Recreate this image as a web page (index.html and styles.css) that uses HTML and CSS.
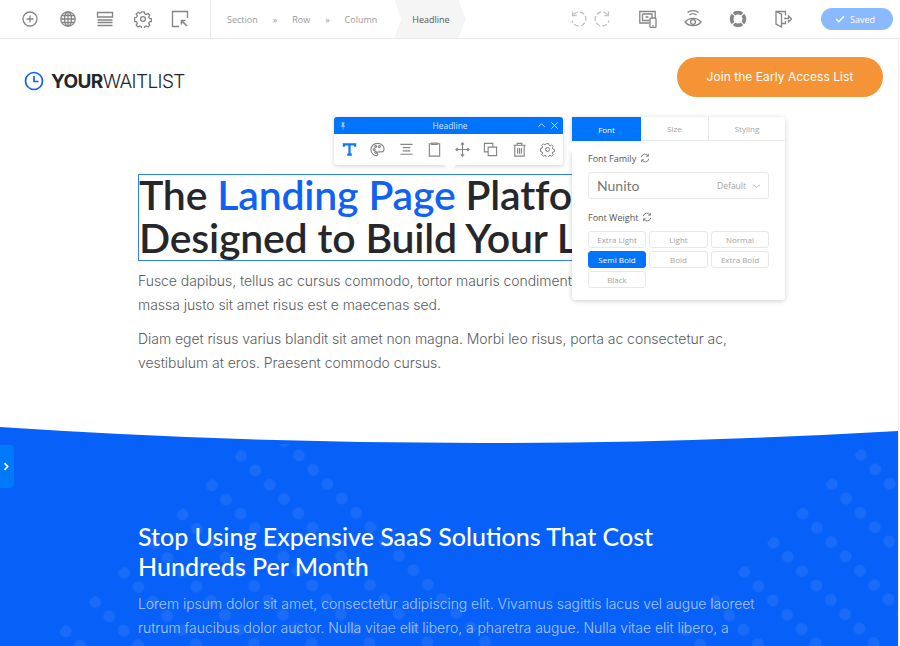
FILE: index.html
```html
<!DOCTYPE html>
<html lang="en">
<head>
    <meta charset="UTF-8">
    <meta name="viewport" content="width=device-width, initial-scale=1.0">
    <title>Your Waitlist - Editor</title>
    <link rel="stylesheet" href="styles.css">
</head>
<body>
    <div class="topbar">
        <div class="tools">
            <svg class="tool" viewBox="0 0 18 18"><circle cx="9" cy="9" r="7"/><path d="M9 5.500v7M5.500 9h7"/></svg>
            <svg class="tool" viewBox="0 0 18 18"><circle cx="9" cy="9" r="7.200"/><ellipse cx="9" cy="9" rx="3.500" ry="7.200"/><path d="M2 9h14M2.800 5.500h12.400M2.800 12.500h12.400M9 2v14"/></svg>
            <svg class="tool" viewBox="0 0 18 18"><path d="M1.500 2.500h15v4.500h-15zM1.500 10h15M1.500 12.500h15M1.500 15.500h15"/></svg>
            <svg class="tool" viewBox="0 0 18 18"><circle cx="9" cy="9" r="2.400"/><path d="M7.700 1.800h2.600l.4 2 1.500.7 1.800-1.100 1.800 1.800-1.100 1.800.7 1.500 2 .4v2.600l-2 .4-.7 1.500 1.100 1.800-1.800 1.800-1.800-1.100-1.500.7-.4 2H7.700l-.4-2-1.500-.7-1.800 1.100-1.800-1.800 1.100-1.800-.7-1.500-2-.4V7.700l2-.4.700-1.500-1.100-1.800 1.800-1.800 1.800 1.100 1.500-.7z"/></svg>
            <svg class="tool" viewBox="0 0 18 18"><path d="M8 16.500H1.500v-15h15V8"/><path d="M16 16l-5.500-5.500M10.500 14.500v-4h4" class="thick"/></svg>
        </div>
        <div class="crumbs">
            <span>Section</span>
            <span class="sep">»</span>
            <span>Row</span>
            <span class="sep">»</span>
            <span>Column</span>
            <span class="crumb-active">Headline</span>
        </div>
        <div class="actions">
            <div class="history">
                <svg class="tool faint" viewBox="0 0 18 18"><path d="M3.500 4.500a7 7 0 1 1-1.400 6" stroke-dasharray="5 2"/><path d="M2.500 1.500v4h4"/></svg>
                <svg class="tool faint" viewBox="0 0 18 18"><path d="M14.500 4.500a7 7 0 1 0 1.400 6" stroke-dasharray="5 2"/><path d="M15.500 1.500v4h-4"/></svg>
            </div>
            <svg class="tool" viewBox="0 0 18 18"><path d="M10.500 13H.8V1.500h15.400v6.500"/><path d="M3.500 4h9.500v4M3.500 4v6.500h7M6.500 7h3"/><rect x="11" y="8" width="6" height="9.500" rx="1"/><path d="M13.200 15.800h1.600"/></svg>
            <svg class="tool" viewBox="0 0 18 18"><path d="M5.500 5a5.500 5.500 0 0 1 7 0M3.500 2.600a8.500 8.500 0 0 1 11 0"/><path d="M1 12c4-4.800 12-4.800 16 0-4 4.800-12 4.800-16 0z"/><circle cx="9" cy="12" r="2.400"/></svg>
            <svg class="tool buoy" viewBox="0 0 18 18"><circle cx="9" cy="9" r="6.400"/><path d="M3 3l3.600 3.600M15 3l-3.600 3.600M3 15l3.600-3.600M15 15l-3.600-3.600" class="spoke"/></svg>
            <svg class="tool" viewBox="0 0 18 18"><path d="M11.500 5.500V1.500H2v12.500l5.500 3V4.200L2 1.500M7.500 13.500h4V11"/><path d="M10 8.500h4.500V6l3 3-3 3V10"/></svg>
            <div class="saved">
                <svg class="saved-check" viewBox="0 0 12 10"><path d="M1 5l3.500 3.500L11 1.500"/></svg>
                <span>Saved</span>
            </div>
        </div>
    </div>

    <div class="page">
        <div class="header">
            <div class="logo">
                <svg class="logo-icon" viewBox="0 0 20 20"><circle cx="10" cy="10" r="8.500"/><path d="M10 5v5.500h4.500"/></svg>
                <span class="logo-text"><b>YOUR</b>WAITLIST</span>
            </div>
            <a class="cta">Join the Early Access List</a>
        </div>

        <div class="hero">
            <h1 class="headline"><span class="headline-text">The <span class="accent">Landing Page</span> Platform Designed to Build Your List</span></h1>
            <p>Fusce dapibus, tellus ac cursus commodo, tortor mauris condimentum nibh, ut fermentum massa justo sit amet risus est e maecenas sed.</p>
            <p>Diam eget risus varius blandit sit amet non magna. Morbi leo risus, porta ac consectetur ac, vestibulum at eros. Praesent commodo cursus.</p>
        </div>

        <svg class="wave" viewBox="0 0 898 17" preserveAspectRatio="none"><path d="M0 0Q449 30 898 4V17H0Z"/></svg>
        <div class="offer">
            <svg class="dots" viewBox="0 444 898 202">
                <defs>
                    <pattern id="dots-left" patternUnits="userSpaceOnUse" x="-10.130" y="-20.650" width="20.270" height="41.300" patternTransform="translate(241 456) rotate(45)">
                        <circle cx="10.130" cy="20.650" r="6" fill="#fff" fill-opacity="0.07"/>
                    </pattern>
                    <pattern id="dots-right" patternUnits="userSpaceOnUse" x="-10.130" y="-20.650" width="20.270" height="41.300" patternTransform="translate(861 455) rotate(45)">
                        <circle cx="10.130" cy="20.650" r="6" fill="#fff" fill-opacity="0.07"/>
                    </pattern>
                </defs>
                <polygon points="271,419 498,646 44,646" fill="url(#dots-left)"/>
                <polygon points="898,411 898,646 663,646" fill="url(#dots-right)"/>
            </svg>
            <div class="offer-body">
                <h2>Stop Using Expensive SaaS Solutions That Cost Hundreds Per Month</h2>
                <p>Lorem ipsum dolor sit amet, consectetur adipiscing elit. Vivamus sagittis lacus vel augue laoreet rutrum faucibus dolor auctor. Nulla vitae elit libero, a pharetra augue. Nulla vitae elit libero, a</p>
            </div>
        </div>

        <div class="side-tab">
            <svg viewBox="0 0 6 8"><path d="M1.200 1l2.800 3-2.800 3"/></svg>
        </div>

        <div class="el-bar">
            <div class="el-bar-head">
                <svg class="pin" viewBox="0 0 8 10"><path d="M2 0h4v1l-.5.500V4L7 6H4.500v4h-1V6H1l1.500-2V1.500L2 1z"/></svg>
                <span>Headline</span>
                <svg class="head-btn" viewBox="0 0 10 10"><path d="M1.500 6.500L5 3l3.500 3.500"/></svg>
                <svg class="head-btn" viewBox="0 0 10 10"><path d="M1.500 1.500l7 7M8.500 1.500l-7 7"/></svg>
            </div>
            <div class="el-bar-icons">
                <svg class="el-icon active" viewBox="0 0 16 16"><path d="M2 5V2.500h12V5M8 2.500v11M5.500 13.500h5"/></svg>
                <svg class="el-icon" viewBox="0 0 16 16"><path d="M8 1.500c-4 0-7 3-7 6.500s3 6.500 6 6.500c1.500 0 1.500-1.200 1-2-.5-1 0-2 1.500-2h2.500c1.500 0 3-1 3-3C15 4 12 1.500 8 1.500z"/><circle cx="4.500" cy="8" r="1"/><circle cx="6" cy="4.700" r="1"/><circle cx="10" cy="4.700" r="1"/><circle cx="6" cy="11" r="1"/></svg>
                <svg class="el-icon" viewBox="0 0 16 16"><path d="M1.500 2.500h13M4 6h8M4 9.500h8M1.500 13h13"/></svg>
                <svg class="el-icon" viewBox="0 0 16 16"><path d="M5 1.800H2.500v13.200h11V1.800H11M5 1h6v1.500H5z"/></svg>
                <svg class="el-icon" viewBox="0 0 16 16"><path d="M8 1v14M1 8h14M6.300 2.800L8 1l1.700 1.800M6.300 13.200L8 15l1.700-1.800M2.800 6.300L1 8l1.800 1.700M13.200 6.300L15 8l-1.800 1.700"/></svg>
                <svg class="el-icon" viewBox="0 0 16 16"><path d="M10.500 5.500V1.500h-9v9h4M5.500 5.500h9v9h-9z"/></svg>
                <svg class="el-icon" viewBox="0 0 16 16"><path d="M1.500 3.500h13M5.500 3.500V1.500h5v2M3 3.500v11.500h10V3.500M6 6.500v6M8 6.500v6M10 6.500v6"/></svg>
                <svg class="el-icon" viewBox="0 0 18 18"><circle cx="9" cy="9" r="2.400"/><path d="M7.700 1.800h2.600l.4 2 1.500.7 1.800-1.100 1.800 1.800-1.100 1.800.7 1.500 2 .4v2.600l-2 .4-.7 1.500 1.100 1.800-1.800 1.800-1.800-1.100-1.500.7-.4 2H7.700l-.4-2-1.500-.7-1.800 1.100-1.800-1.800 1.100-1.800-.7-1.500-2-.4V7.700l2-.4.700-1.500-1.100-1.800 1.800-1.800 1.800 1.100 1.500-.7z"/></svg>
            </div>
        </div>

        <div class="font-panel">
            <div class="tabs">
                <div class="tab tab-font active">Font</div>
                <div class="tab tab-size">Size</div>
                <div class="tab tab-styling">Styling</div>
            </div>
            <div class="panel-body">
                <div class="field-label">Font Family
                    <svg class="refresh" viewBox="0 0 12 12"><path d="M1.500 5A4.500 4.500 0 0 1 9.800 3.500M10.500 7A4.500 4.500 0 0 1 2.200 8.500M10 1v2.800H7.200M2 11V8.200h2.800"/></svg>
                </div>
                <div class="select">
                    <span class="select-name">Nunito</span>
                    <span class="select-default">Default</span>
                    <svg class="select-arrow" viewBox="0 0 10 6"><path d="M1 1.500l4 3 4-3"/></svg>
                </div>
                <div class="field-label">Font Weight
                    <svg class="refresh" viewBox="0 0 12 12"><path d="M1.500 5A4.500 4.500 0 0 1 9.800 3.500M10.500 7A4.500 4.500 0 0 1 2.200 8.500M10 1v2.800H7.200M2 11V8.200h2.800"/></svg>
                </div>
                <div class="weights">
                    <div class="weight">Extra Light</div>
                    <div class="weight">Light</div>
                    <div class="weight">Normal</div>
                    <div class="weight active">Semi Bold</div>
                    <div class="weight">Bold</div>
                    <div class="weight">Extra Bold</div>
                    <div class="weight">Black</div>
                </div>
            </div>
        </div>
    </div>
</body>
</html>
```

FILE: styles.css
```css
* {
    box-sizing: border-box;
}
html, body {
    height: 646px;
    overflow: hidden;
}
body {
    margin: 0;
    background-color: white;
    font-family: "Open Sans", sans-serif;
}
h1, h2, p {
    margin: 0;
}

/* top bar */
.topbar {
    display: flex;
    align-items: center;
    height: 39px;
    border-bottom: 1px solid #e8e8e8;
    background-color: white;
}
.tool {
    width: 18px;
    height: 18px;
    fill: none;
    stroke: #858585;
    stroke-width: 1.300;
    flex: none;
}
.tool .thick {
    stroke-width: 1.600;
}
.tool.faint {
    stroke: #c4c4c4;
}
.tool.buoy circle {
    stroke-width: 3.800;
}
.tool.buoy .spoke {
    stroke: white;
    stroke-width: 1.100;
}
.tools {
    display: flex;
    gap: 19.500px;
    height: 38px;
    align-items: center;
    padding: 0 21px;
    border-right: 1px solid #e8e8e8;
}
.crumbs {
    display: flex;
    align-items: center;
    gap: 15px;
    height: 38px;
    padding-left: 16px;
    font-size: 9px;
    color: #999;
}
.crumb-active {
    display: flex;
    align-items: center;
    height: 38px;
    margin-left: 2px;
    padding: 0 16px 0 18px;
    color: #555;
    background-color: #f5f5f5;
    clip-path: polygon(0 0, 90% 0, 100% 50%, 90% 100%, 0 100%, 10% 50%);
}
.actions {
    display: flex;
    align-items: center;
    margin-left: auto;
    padding-right: 7px;
}
.history {
    display: flex;
    gap: 5px;
    margin-right: 28px;
}
.actions > .tool {
    margin-right: 27px;
}
.actions > .tool:nth-child(5) {
    margin-right: 29px;
}
.saved {
    display: flex;
    align-items: center;
    gap: 5px;
    width: 72px;
    height: 22px;
    padding-left: 14px;
    border-radius: 11px;
    background-color: #8ab9fd;
    color: white;
    font-size: 9px;
}
.saved-check {
    width: 10px;
    height: 8px;
    fill: none;
    stroke: white;
    stroke-width: 1.600;
}

/* page */
.page {
    position: relative;
    width: 899px;
    border-right: 1px solid #eee;
}
.header {
    display: flex;
    justify-content: space-between;
    padding: 18px 15px 0 24px;
}
.logo {
    display: flex;
    align-items: center;
    gap: 7px;
    padding-top: 8px;
}
.logo-icon {
    width: 20px;
    height: 20px;
    fill: none;
    stroke: #0f62f2;
    stroke-width: 1.700;
}
.logo-text {
    font-family: "Inter", sans-serif;
    font-size: 19px;
    font-weight: 300;
    letter-spacing: -0.600px;
    color: #25272b;
}
.logo-text b {
    font-weight: 700;
}
.cta {
    width: 206px;
    height: 40px;
    line-height: 40px;
    border-radius: 20px;
    text-align: center;
    background-color: #f59436;
    color: white;
    font-family: "Inter", sans-serif;
    font-size: 12px;
    letter-spacing: 0.050px;
}
.hero {
    width: 622px;
    margin: 77px 0 52px 138px;
    font-family: "Inter", sans-serif;
    font-size: 14px;
    font-weight: 300;
    line-height: 24px;
    letter-spacing: -0.050px;
    color: #5a5c60;
}
.headline {
    height: 87px;
    margin-bottom: 8px;
    border: 1.500px solid #2f80f5;
    font-family: "Lato", sans-serif;
    font-size: 41px;
    font-weight: 600;
    line-height: 43px;
    letter-spacing: -0.200px;
    color: #25272b;
}
.headline-text {
    display: block;
    margin-top: -2px;
}
.accent {
    color: #0f62f2;
}
.hero p {
    margin-bottom: 10px;
}
.wave {
    display: block;
    width: 898px;
    height: 17px;
    fill: #0760f8;
}
.offer {
    position: relative;
    width: 898px;
    height: 202px;
    background-color: #0760f8;
    overflow: hidden;
}
.dots {
    position: absolute;
    top: 0;
    left: 0;
    width: 898px;
    height: 202px;
}
.offer-body {
    position: relative;
    width: 622px;
    margin-left: 138px;
    padding-top: 77px;
}
.offer-body h2 {
    font-family: "Lato", sans-serif;
    font-size: 25px;
    font-weight: 500;
    line-height: 30px;
    color: white;
}
.offer-body p {
    margin-top: 11px;
    font-family: "Inter", sans-serif;
    font-size: 14px;
    font-weight: 300;
    line-height: 24px;
    letter-spacing: -0.050px;
    color: rgba(255,255,255,0.65);
}
.side-tab {
    position: absolute;
    top: 406px;
    left: 0;
    display: flex;
    align-items: center;
    width: 14px;
    height: 43px;
    padding-left: 3px;
    border-radius: 0 4px 4px 0;
    background-color: #0079fb;
}
.side-tab svg {
    width: 7px;
    height: 9px;
    fill: none;
    stroke: white;
    stroke-width: 1.500;
}

/* element toolbar */
.el-bar {
    position: absolute;
    top: 78px;
    left: 334px;
    width: 229px;
    height: 48px;
    border-radius: 3px;
    background-color: white;
    box-shadow: 0 1px 4px rgba(0,0,0,0.18);
}
.el-bar::after {
    content: "";
    position: absolute;
    bottom: -4px;
    left: 112px;
    width: 8px;
    height: 8px;
    background-color: white;
    transform: rotate(45deg);
}
.el-bar-head {
    display: flex;
    align-items: center;
    gap: 4px;
    height: 17px;
    padding: 0 4px 0 6px;
    border-radius: 3px 3px 0 0;
    background-color: #0074fb;
    color: #cfe3ff;
    font-size: 8.500px;
}
.el-bar-head span {
    flex: 1;
    text-align: center;
    padding-left: 17px;
}
.pin {
    width: 6px;
    height: 8px;
    fill: #9cc7ff;
}
.head-btn {
    width: 9px;
    height: 9px;
    fill: none;
    stroke: #cfe3ff;
    stroke-width: 1;
}
.el-bar-icons {
    display: flex;
    justify-content: space-between;
    align-items: center;
    position: relative;
    z-index: 1;
    height: 31px;
    padding: 0 8px;
}
.el-icon {
    width: 15px;
    height: 15px;
    fill: none;
    stroke: #858585;
    stroke-width: 1.200;
}
.el-icon.active {
    stroke: #0f78f5;
    stroke-width: 2.400;
}

/* font panel */
.font-panel {
    position: absolute;
    top: 78px;
    left: 572px;
    width: 213px;
    height: 183px;
    border-radius: 3px;
    background-color: white;
    box-shadow: 0 1px 5px rgba(0,0,0,0.2);
}
.font-panel::before {
    content: "";
    position: absolute;
    top: 27px;
    left: -4px;
    width: 8px;
    height: 8px;
    background-color: white;
    transform: rotate(45deg);
}
.tabs {
    display: flex;
    height: 24px;
    font-size: 8px;
    color: #a3a3a3;
}
.tab {
    display: flex;
    align-items: center;
    justify-content: center;
    border-bottom: 1px solid #e8e8e8;
}
.tab-font {
    width: 69px;
}
.tab-size {
    width: 67px;
}
.tab-styling {
    flex: 1;
    border-left: 1px solid #e8e8e8;
}
.tab.active {
    border-bottom: none;
    background-color: #0074fb;
    color: white;
}
.panel-body {
    position: relative;
    padding: 10px 16px 0;
}
.field-label {
    display: flex;
    align-items: center;
    gap: 4px;
    height: 14px;
    font-size: 9px;
    color: #555;
}
.refresh {
    width: 10px;
    height: 10px;
    fill: none;
    stroke: #777;
    stroke-width: 1.100;
}
.select {
    display: flex;
    align-items: center;
    height: 27px;
    margin: 7px 0 11px;
    padding: 0 7px 0 8px;
    border: 1px solid #e8e8e8;
    border-radius: 3px;
    color: #777;
}
.select-name {
    flex: 1;
    font-family: "Lato", sans-serif;
    font-size: 14px;
}
.select-default {
    font-size: 8.500px;
    color: #a3a3a3;
}
.select-arrow {
    width: 9px;
    height: 6px;
    margin-left: 6px;
    fill: none;
    stroke: #a3a3a3;
    stroke-width: 0.800;
}
.weights {
    display: grid;
    grid-template-columns: 58px 59px 58px;
    grid-auto-rows: 17px;
    gap: 3px;
    margin-top: 7px;
}
.weight {
    display: flex;
    align-items: center;
    justify-content: center;
    border: 1px solid #e8e8e8;
    border-radius: 3px;
    font-size: 8px;
    color: #a3a3a3;
}
.weight.active {
    border-color: #0074fb;
    background-color: #0074fb;
    color: white;
}
```
